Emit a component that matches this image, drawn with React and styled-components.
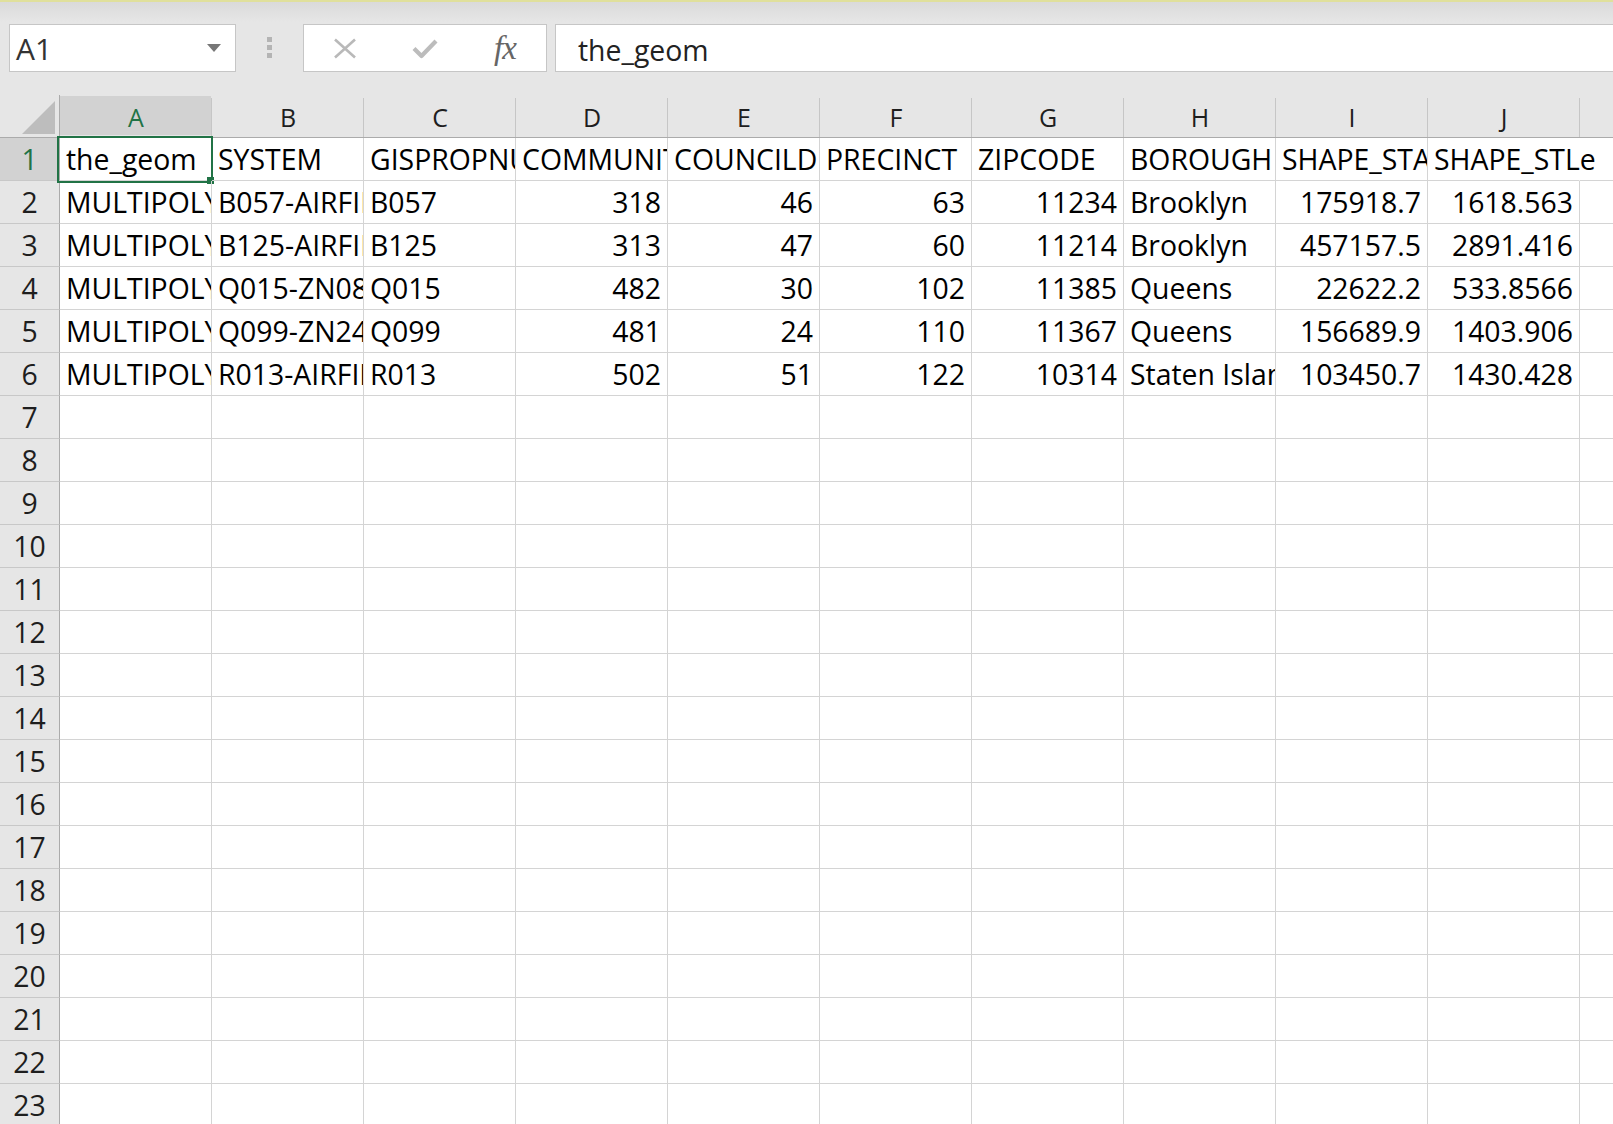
import styled, { createGlobalStyle } from 'styled-components';

const GlobalStyle = createGlobalStyle`
  html, body {
    margin: 0;
    padding: 0;
    background: #fff;
    overflow: hidden;
  }
`;

const CELL_FONT = `'Open Sans', Lato, sans-serif`;
const GREEN = '#217346';

const StyledWindow = styled.div`
  display: flex;
  flex-direction: column;
  width: 1613px;
  height: 1124px;
  overflow: hidden;
  background: #fff;
  font-family: ${CELL_FONT};
`;

const StyledTopStrip = styled.div`
  flex-shrink: 0;
  height: 2px;
  background: #e0e09c;
`;

const StyledFormulaBar = styled.div`
  flex-shrink: 0;
  display: flex;
  align-items: flex-start;
  height: 93px;
  padding: 22px 0 0 9px;
  box-sizing: border-box;
  background: linear-gradient(#dadada 0, #e6e6e6 20px, #e6e6e6 100%);
`;

const StyledNameBox = styled.div`
  display: flex;
  align-items: center;
  justify-content: space-between;
  width: 227px;
  height: 48px;
  box-sizing: border-box;
  padding: 0 14px 0 6px;
  background: #fff;
  border: 1px solid #c6c6c6;
  font-family: 'Open Sans', sans-serif;
  font-size: 30px;
  color: #333;
`;

const StyledCaret = styled.span`
  width: 0;
  height: 0;
  border-left: 7px solid transparent;
  border-right: 7px solid transparent;
  border-top: 8px solid #777;
`;

const StyledGrip = styled.div`
  display: flex;
  flex-direction: column;
  gap: 3px;
  margin: 13px 31px 0 31px;
`;

const StyledGripDot = styled.span`
  width: 5px;
  height: 5px;
  background: #b4b4b4;
`;

const StyledButtonBox = styled.div`
  display: flex;
  width: 244px;
  height: 48px;
  box-sizing: border-box;
  padding-left: 1px;
  background: #fff;
  border: 1px solid #c6c6c6;
`;

const StyledBarButton = styled.div`
  display: flex;
  align-items: center;
  justify-content: center;
  width: 80px;
  height: 100%;
`;

const StyledFx = styled.span`
  font-family: 'Liberation Serif', serif;
  font-style: italic;
  font-size: 33px;
  color: #666;
  letter-spacing: -1px;
`;

const StyledFormulaInput = styled.div`
  flex: 1;
  display: flex;
  align-items: center;
  height: 48px;
  margin-left: 8px;
  margin-right: -4px;
  box-sizing: border-box;
  padding: 3px 0 0 22px;
  background: #fff;
  border: 1px solid #c6c6c6;
  font-size: 28.4px;
  color: #222;
`;

const StyledRow = styled.div`
  flex-shrink: 0;
  display: flex;
  height: 43px;
`;

const StyledCorner = styled.div`
  flex-shrink: 0;
  display: flex;
  align-items: flex-end;
  justify-content: flex-end;
  width: 60px;
  box-sizing: border-box;
  padding: 0 4px 3px 0;
  background: #e6e6e6;
  border-right: 1px solid #ababab;
  border-bottom: 1px solid #ababab;
`;

const StyledCornerTriangle = styled.span`
  width: 33px;
  height: 33px;
  background: #bdbdbd;
  clip-path: polygon(100% 0, 100% 100%, 0 100%);
`;

const StyledColHeader = styled.div`
  flex-shrink: 0;
  width: 152px;
  box-sizing: border-box;
  padding-top: 1px;
  text-align: center;
  font-size: 25px;
  line-height: 42px;
  color: ${({ $active }) => ($active ? GREEN : '#1e1e1e')};
  background:
    linear-gradient(#c6c6c6, #c6c6c6) right 0 bottom 0 / 1px 39px no-repeat,
    ${({ $active }) =>
      $active
        ? 'linear-gradient(#d2d2d2, #d2d2d2) left 0 top 1px / calc(100% - 1px) 39px no-repeat, #e6e6e6'
        : '#e6e6e6'};
  border-bottom: 1px solid #ababab;
`;

const StyledRowHeader = styled.div`
  flex-shrink: 0;
  width: 60px;
  box-sizing: border-box;
  padding-top: 1px;
  text-align: center;
  font-size: 28.4px;
  line-height: 41px;
  color: ${({ $active }) => ($active ? GREEN : '#1e1e1e')};
  background: ${({ $active }) => ($active ? '#d2d2d2' : '#e6e6e6')};
  border-right: 1px solid #ababab;
  border-bottom: 1px solid #c8c8c8;
`;

const StyledCell = styled.div`
  position: relative;
  flex-shrink: 0;
  width: 152px;
  box-sizing: border-box;
  border-right: 1px solid ${({ $spill }) => ($spill ? 'transparent' : '#d4d4d4')};
  border-bottom: 1px solid #d4d4d4;
`;

const StyledCellText = styled.div`
  height: 42px;
  box-sizing: border-box;
  padding: 1px 6px 0;
  overflow: ${({ $spill }) => ($spill ? 'visible' : 'hidden')};
  white-space: nowrap;
  text-align: ${({ $num }) => ($num ? 'right' : 'left')};
  font-size: 28.4px;
  line-height: 41px;
  color: #000;
`;

const StyledSelection = styled.div`
  position: absolute;
  left: -3px;
  top: -2px;
  width: 156px;
  height: 47px;
  box-sizing: border-box;
  border: 2px solid ${GREEN};
  pointer-events: none;
`;

const StyledHandle = styled.span`
  position: absolute;
  left: 148px;
  top: 39px;
  width: 7px;
  height: 7px;
  background: ${GREEN};
`;

const COLUMNS = ['A', 'B', 'C', 'D', 'E', 'F', 'G', 'H', 'I', 'J', 'K'];

const DATA = [
  ['the_geom', 'SYSTEM', 'GISPROPNUM', 'COMMUNITYB', 'COUNCILDIS', 'PRECINCT', 'ZIPCODE', 'BOROUGH', 'SHAPE_STAr', 'SHAPE_STLe'],
  ['MULTIPOLYGON (((-73.9', 'B057-AIRFIELD', 'B057', 318, 46, 63, 11234, 'Brooklyn', '175918.7', '1618.563'],
  ['MULTIPOLYGON (((-73.9', 'B125-AIRFIELD', 'B125', 313, 47, 60, 11214, 'Brooklyn', '457157.5', '2891.416'],
  ['MULTIPOLYGON (((-73.7', 'Q015-ZN08', 'Q015', 482, 30, 102, 11385, 'Queens', '22622.2', '533.8566'],
  ['MULTIPOLYGON (((-73.8', 'Q099-ZN24', 'Q099', 481, 24, 110, 11367, 'Queens', '156689.9', '1403.906'],
  ['MULTIPOLYGON (((-74.1', 'R013-AIRFIELD', 'R013', 502, 51, 122, 10314, 'Staten Island', '103450.7', '1430.428'],
];

const NUMERIC_COLS = [3, 4, 5, 6, 8, 9];
const ROW_COUNT = 23;

const CancelIcon = () => (
  <svg width="24" height="21" viewBox="0 0 24 21">
    <path d="M2 1.5 L22 19.5 M22 1.5 L2 19.5" stroke="#b9b9b9" strokeWidth="2.6" fill="none" />
  </svg>
);

const EnterIcon = () => (
  <svg width="26" height="21" viewBox="0 0 26 21">
    <path d="M2 10.5 L9.5 18 L24 3" stroke="#bcbcbc" strokeWidth="4.2" fill="none" strokeLinejoin="round" />
  </svg>
);

const FormulaBar = () => (
  <StyledFormulaBar>
    <StyledNameBox>
      A1
      <StyledCaret />
    </StyledNameBox>
    <StyledGrip>
      <StyledGripDot />
      <StyledGripDot />
      <StyledGripDot />
    </StyledGrip>
    <StyledButtonBox>
      <StyledBarButton>
        <CancelIcon />
      </StyledBarButton>
      <StyledBarButton>
        <EnterIcon />
      </StyledBarButton>
      <StyledBarButton>
        <StyledFx>fx</StyledFx>
      </StyledBarButton>
    </StyledButtonBox>
    <StyledFormulaInput>the_geom</StyledFormulaInput>
  </StyledFormulaBar>
);

const SheetRow = ({ index }) => {
  const values = DATA[index] || [];
  return (
    <StyledRow>
      <StyledRowHeader $active={index === 0}>{index + 1}</StyledRowHeader>
      {COLUMNS.map((col, c) => {
        const spill = index === 0 && c === 9;
        return (
          <StyledCell key={col} $spill={spill}>
            <StyledCellText $num={index > 0 && NUMERIC_COLS.includes(c)} $spill={spill}>
              {values[c]}
            </StyledCellText>
            {index === 0 && c === 0 && (
              <StyledSelection>
                <StyledHandle />
              </StyledSelection>
            )}
          </StyledCell>
        );
      })}
    </StyledRow>
  );
};

const App = () => {
  return (
    <StyledWindow>
      <GlobalStyle />
      <StyledTopStrip />
      <FormulaBar />
      <StyledRow>
        <StyledCorner>
          <StyledCornerTriangle />
        </StyledCorner>
        {COLUMNS.map((col, c) => (
          <StyledColHeader key={col} $active={c === 0}>
            {col}
          </StyledColHeader>
        ))}
      </StyledRow>
      {Array.from({ length: ROW_COUNT }, (_, i) => (
        <SheetRow key={i} index={i} />
      ))}
    </StyledWindow>
  );
};

export default App;
